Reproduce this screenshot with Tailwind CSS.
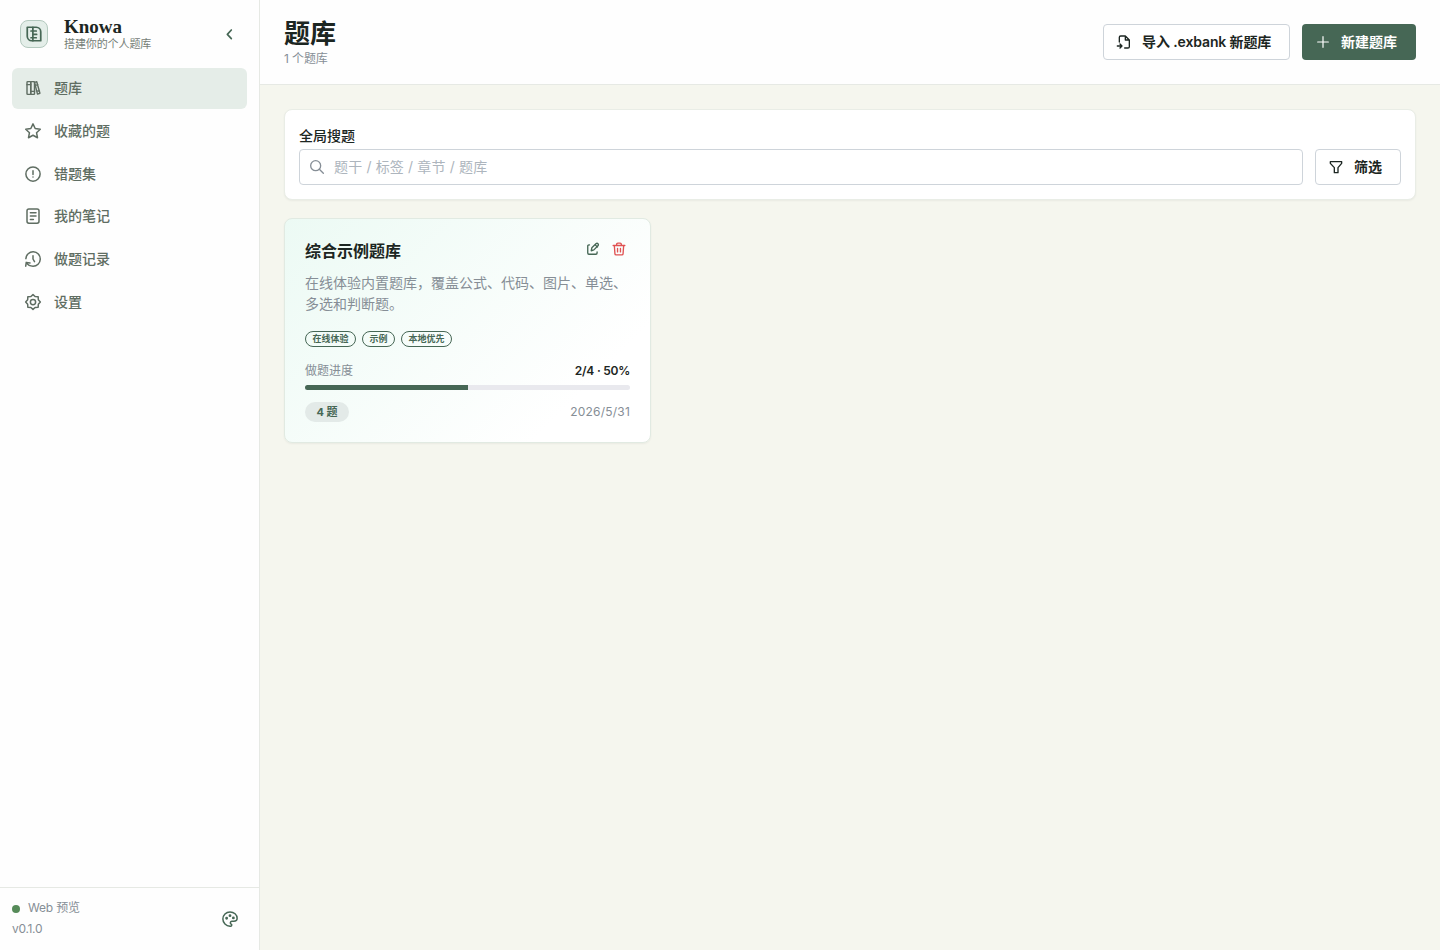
<!DOCTYPE html>
<html lang="zh-CN">
<head>
  <meta charset="UTF-8" />
  <meta name="viewport" content="width=device-width, initial-scale=1.0" />
  <title>Knowa</title>
  <script src="https://cdn.jsdelivr.net/npm/@tailwindcss/browser@4"></script>
</head>
<body class="flex h-screen overflow-hidden bg-[#f5f6ee] font-['Inter','Noto_Sans_CJK_SC',sans-serif] text-sm text-[#1c2622]">

  <!-- Sidebar -->
  <aside class="flex w-[260px] shrink-0 flex-col border-r border-[#e6e9e4] bg-[#fefefe]">
    <div class="flex h-[68px] items-center pr-[22px] pl-5">
      <div class="flex size-7 items-center justify-center rounded-lg border border-[#b3c9be] bg-[#e4eee9] text-[#466755]">
        <svg class="size-[18px]" viewBox="0 0 24 24" fill="none" stroke="currentColor" stroke-width="2.300" stroke-linecap="round" stroke-linejoin="round">
          <path d="M3 3h12a6 6 0 0 1 6 6v12H9a6 6 0 0 1-6-6z" />
          <path d="M10.500 3v18M8 8h7M10.500 12.500h5M8 17h7" />
        </svg>
      </div>
      <div class="ml-4 pt-px">
        <div class="font-['Liberation_Serif',serif] text-[19px] leading-[18px] font-bold">Knowa</div>
        <div class="text-[11px] leading-4 tracking-[-0.100px] text-[#768078]">搭建你的个人题库</div>
      </div>
      <svg class="ml-auto size-4 text-[#466755]" viewBox="0 0 24 24" fill="none" stroke="currentColor" stroke-width="2.500" stroke-linecap="round" stroke-linejoin="round"><path d="m15.500 6-6 6.500 6 6.500" /></svg>
    </div>

    <nav class="flex flex-col gap-[2px] px-3 font-medium text-[#5f6d62]">
      <a class="flex h-[40.700px] items-center gap-3 rounded-md bg-[#e5ede8] px-3">
        <svg class="size-[18px]" viewBox="0 0 24 24" fill="none" stroke="currentColor" stroke-width="1.900" stroke-linecap="round" stroke-linejoin="round">
          <rect x="4" y="3.500" width="5" height="17" rx="1" /><rect x="9" y="3.500" width="5" height="17" rx="1" />
          <path d="M4 7.500h5M9 16.500h5M14 4.500l3-.8 4.200 15.300-3.200 1.100zM15 8.500l3.500-1M17 16.500l3.500-1" />
        </svg>
        <span>题库</span>
      </a>
      <a class="flex h-[40.700px] items-center gap-3 px-3">
        <svg class="size-[18px]" viewBox="0 0 24 24" fill="none" stroke="currentColor" stroke-width="2" stroke-linejoin="round"><path d="m12 2.500 2.900 6.200 6.800.9-5 4.700 1.300 6.700-6-3.300L6 21l1.300-6.700-5-4.700 6.800-.9z" /></svg>
        <span>收藏的题</span>
      </a>
      <a class="flex h-[40.700px] items-center gap-3 px-3">
        <svg class="size-[18px]" viewBox="0 0 24 24" fill="none" stroke="currentColor" stroke-width="2" stroke-linecap="round"><circle cx="12" cy="12" r="9.500" /><path d="M12 7.500v5M12 16v.1" /></svg>
        <span>错题集</span>
      </a>
      <a class="flex h-[40.700px] items-center gap-3 px-3">
        <svg class="size-[18px]" viewBox="0 0 24 24" fill="none" stroke="currentColor" stroke-width="2" stroke-linecap="round"><rect x="4" y="2.500" width="16" height="19" rx="2.500" /><path d="M8.500 7.500h7.500M8.500 12h7.500M8.500 16.500h4" /></svg>
        <span>我的笔记</span>
      </a>
      <a class="flex h-[40.700px] items-center gap-3 px-3">
        <svg class="size-[18px]" viewBox="0 0 24 24" fill="none" stroke="currentColor" stroke-width="2" stroke-linecap="round" stroke-linejoin="round"><path d="M2.500 11.500A9.600 9.600 0 1 1 12 21.600q-6 0-8.500-4.600M12 7.500V12l2 3.500M2.300 21.500l.7-5 5 .7" /></svg>
        <span>做题记录</span>
      </a>
      <a class="flex h-[40.700px] items-center gap-3 px-3">
        <svg class="size-[18px]" viewBox="0 0 24 24" fill="none" stroke="currentColor" stroke-width="2" stroke-linejoin="round">
          <path d="m12 2.200 2.800 2.500 4.100.2.200 4.100 2.700 3-2.700 3-.2 4.100-4.100.2-2.800 2.500-2.800-2.500-4.100-.2-.2-4.100-2.700-3 2.700-3 .2-4.100 4.100-.2z" /><circle cx="12" cy="12" r="3.500" />
        </svg>
        <span>设置</span>
      </a>
    </nav>

    <div class="mt-auto flex h-[63px] items-center border-t border-[#e6e9e4] pr-5 pl-3 text-xs leading-[21px] text-[#868e96]">
      <div class="pb-0.5">
        <div class="flex items-center gap-2 tracking-[-0.200px]"><span class="mt-0.5 size-2 rounded-full bg-[#568b59]"></span>Web 预览</div>
        <div class="tracking-[-0.300px]">v0.1.0</div>
      </div>
      <svg class="ml-auto size-[18px] text-[#466755]" viewBox="0 0 24 24" fill="none" stroke="currentColor" stroke-width="2" stroke-linecap="round" stroke-linejoin="round">
        <path d="M12 21.500a9.500 9.500 0 0 1 0-19c5.300 0 9.500 3.800 9.500 8.500 0 2.200-1.900 4-4.500 4h-2.500a2 2 0 0 0-1 3.750A1.500 1.500 0 0 1 12 21.500" />
        <circle cx="7.500" cy="11" r=".9" /><circle cx="12" cy="7.500" r=".9" /><circle cx="16.500" cy="10.500" r=".9" />
      </svg>
    </div>
  </aside>

  <main class="flex min-w-0 flex-1 flex-col">
    <header class="flex h-[85px] items-center justify-between border-b border-[#e6e9e4] bg-[#fefefe] px-6">
      <div>
        <h1 class="text-[26px] leading-[34px] font-bold">题库</h1>
        <p class="text-xs leading-4 tracking-[-0.100px] text-[#868e96]">1 个题库</p>
      </div>
      <div class="flex gap-3 font-semibold">
        <button class="flex h-9 w-[187px] items-center gap-2.5 rounded border border-[#ced4da] bg-white pl-3">
          <svg class="size-4" viewBox="0 0 24 24" fill="none" stroke="currentColor" stroke-width="2" stroke-linecap="round" stroke-linejoin="round"><path d="M5 12V5a2 2 0 0 1 2-2h7l6 6v10a2 2 0 0 1-2 2h-5M14 3v6h6M2 18h7M6 15l3 3-3 3" /></svg>
          <span class="tracking-[-0.120px] whitespace-nowrap">导入 .exbank 新题库</span>
        </button>
        <button class="flex h-9 w-[114px] items-center gap-2.5 rounded bg-[#466755] pl-[13px] text-white">
          <svg class="size-4" viewBox="0 0 24 24" fill="none" stroke="currentColor" stroke-width="1.800" stroke-linecap="round"><path d="M12 4v16M4 12h16" /></svg>
          <span>新建题库</span>
        </button>
      </div>
    </header>

    <div class="px-6 pt-6">
      <!-- Search -->
      <section class="h-[91px] rounded-lg border border-[#e9ede6] bg-white px-3.5 pt-[15px] shadow-xs">
        <label for="search" class="block h-6 leading-[21px] font-medium">全局搜题</label>
        <div class="flex gap-3">
          <div class="flex h-9 flex-1 items-center gap-[9px] rounded border border-[#ced4da] pl-[9px] text-[#868e96]">
            <svg class="size-4" viewBox="0 0 24 24" fill="none" stroke="currentColor" stroke-width="2" stroke-linecap="round"><circle cx="10" cy="10" r="7.500" /><path d="m15.500 15.500 6 6" /></svg>
            <input id="search" type="text" placeholder="题干 / 标签 / 章节 / 题库" class="flex-1 tracking-[0.150px] outline-none placeholder:text-[#adb5bd]" />
          </div>
          <button class="flex h-9 w-[86px] items-center gap-2.5 rounded border border-[#ced4da] pl-3 font-semibold">
            <svg class="size-4" viewBox="0 0 24 24" fill="none" stroke="currentColor" stroke-width="2" stroke-linejoin="round"><path d="M3.500 4h17v2.500L15 13v7.500H9.500V13l-6-6.500z" /></svg>
            <span>筛选</span>
          </button>
        </div>
      </section>

      <!-- Bank card -->
      <article class="mt-[18px] h-[225px] w-[367px] rounded-lg border border-[#e1eae2] bg-linear-135 from-[#ecfaf4] to-white to-80% px-5 pt-[21px] shadow-xs">
        <div class="flex items-center">
          <h2 class="text-base leading-[22px] font-bold">综合示例题库</h2>
          <div class="mr-1 mb-1 ml-auto flex gap-3">
            <svg class="size-3.5 text-[#466755]" viewBox="0 0 24 24" fill="none" stroke="currentColor" stroke-width="2.300" stroke-linecap="round" stroke-linejoin="round"><path d="M6 5H5a2 2 0 0 0-2 2v12a2 2 0 0 0 2 2h12a2 2 0 0 0 2-2v-2M9 15l1-5 7-7q2-1.500 3.500 0t0 3.500l-7 7zM15.500 4.500l4 4" /></svg>
            <svg class="size-3.5 text-[#e05252]" viewBox="0 0 24 24" fill="none" stroke="currentColor" stroke-width="2.300" stroke-linecap="round" stroke-linejoin="round"><path d="M2 6h20M4 6l1 14a2 2 0 0 0 2 2h10a2 2 0 0 0 2-2l1-14M8 6V4a2 2 0 0 1 2-2h4a2 2 0 0 1 2 2v2M9.500 11v6M14.500 11v6" /></svg>
          </div>
        </div>
        <p class="mt-[10px] text-sm leading-[21px] text-[#868e96]">在线体验内置题库，覆盖公式、代码、图片、单选、多选和判断题。</p>
        <div class="mt-[17px] flex gap-1.5 text-[9px] leading-[14px] font-bold text-[#466755]">
          <span class="w-[51px] rounded-full border border-[#466755] text-center">在线体验</span>
          <span class="w-[33px] rounded-full border border-[#466755] text-center">示例</span>
          <span class="w-[51px] rounded-full border border-[#466755] text-center">本地优先</span>
        </div>
        <div class="mt-[14px] flex justify-between text-xs leading-[19px]">
          <span class="text-[#868e96]">做题进度</span>
          <span class="font-semibold tracking-[-0.250px]">2/4 · 50%</span>
        </div>
        <div class="mt-[5px] h-[5px] overflow-hidden rounded-full bg-[#e9e9ee]">
          <div class="h-full bg-[#466755]" style="width: 50%"></div>
        </div>
        <div class="mt-3 flex items-center justify-between">
          <span class="h-5 w-11 rounded-full bg-[#e3eae8] text-center text-[11px] leading-5 font-bold text-[#466755]">4 题</span>
          <span class="text-xs tracking-[0.200px] text-[#868e96]">2026/5/31</span>
        </div>
      </article>
    </div>
  </main>
</body>
</html>
